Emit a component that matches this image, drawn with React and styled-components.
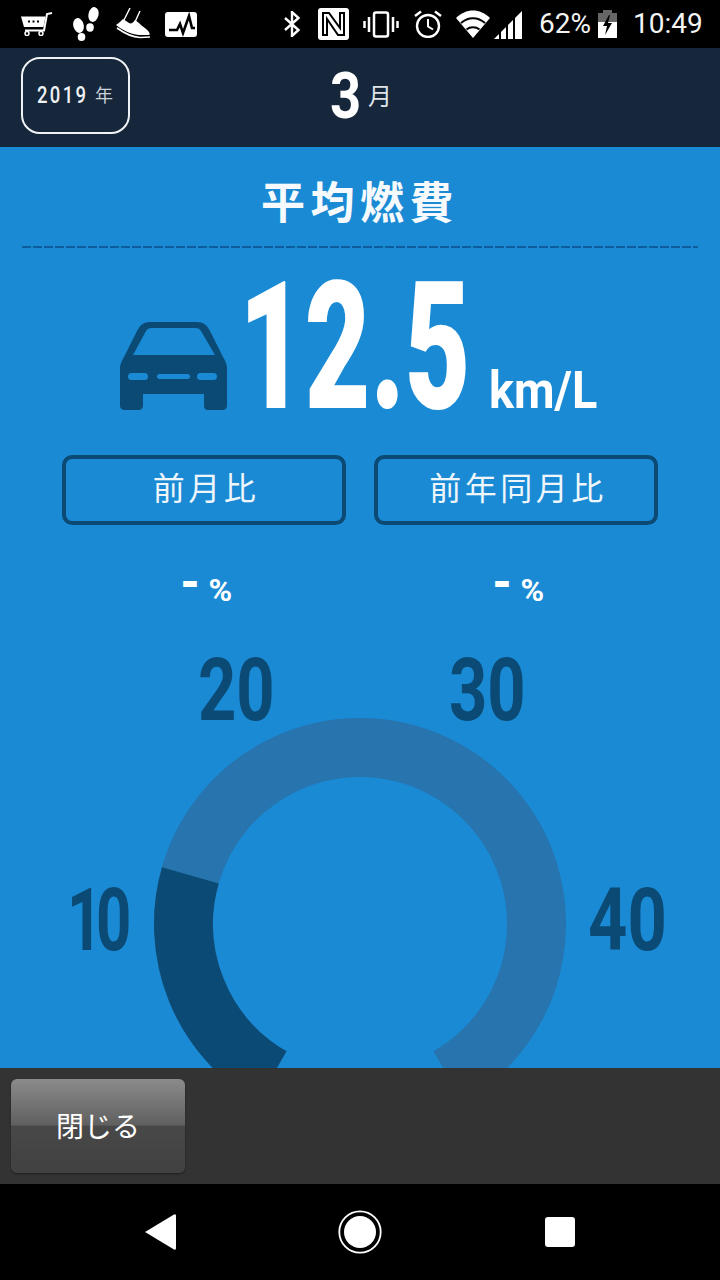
import React from 'react';
import styled, { createGlobalStyle } from 'styled-components';

const GlobalStyle = createGlobalStyle`
  html, body {
    margin: 0;
    padding: 0;
    background: #000;
  }
`;

const JP = `Roboto, "Noto Sans CJK JP", sans-serif`;
const BLUE = '#1a8ad4';
const NAVY = '#0b4a74';

const Page = styled.div`
  width: 720px;
  height: 1280px;
  display: flex;
  flex-direction: column;
  overflow: hidden;
  font-family: ${JP};
  color: #fff;
`;

const StatusBar = styled.div`
  height: 48px;
  flex: none;
  background: #000;
  display: flex;
  align-items: center;
  padding-left: 21px;
`;

const StatusIcon = styled.svg`
  flex: none;
  display: block;
  margin-left: ${p => p.$ml || 0}px;
`;

const StatusText = styled.span`
  font-size: 28px;
  line-height: 48px;
  color: #f4f4f4;
  margin-left: ${p => p.$ml}px;
  white-space: nowrap;
`;

const Header = styled.div`
  height: 99px;
  flex: none;
  background: #16273b;
  display: flex;
  align-items: center;
  padding-left: 21px;
`;

const YearButton = styled.div`
  width: 109px;
  height: 77px;
  margin-top: -4px;
  box-sizing: border-box;
  border: 2px solid #f0f3f5;
  border-radius: 19px;
  display: flex;
  align-items: center;
  padding-left: 14px;
`;

const Condensed = styled.span`
  display: inline-block;
  flex: none;
  width: ${p => p.$width}px;
  margin-bottom: ${p => p.$mb || 0}px;
  font-size: ${p => p.$size}px;
  font-weight: ${p => p.$weight || 700};
  letter-spacing: ${p => p.$spacing || 0}px;
  line-height: 0.72;
  white-space: nowrap;
  transform: scaleX(${p => p.$scale});
  transform-origin: left center;
  color: ${p => p.$color || '#fff'};
`;

const YearUnit = styled.span`
  font-size: 18px;
  line-height: 18px;
  color: #c9d0d6;
  margin-left: 6px;
`;

const MonthGroup = styled.div`
  display: flex;
  align-items: center;
  margin-left: 200px;
`;

const MonthUnit = styled.span`
  font-size: 24px;
  line-height: 26px;
  color: #dfe4e8;
  margin-left: 8px;
`;

const Main = styled.main`
  flex: 1;
  min-height: 0;
  overflow: hidden;
  background: ${BLUE};
  display: flex;
  flex-direction: column;
`;

const Title = styled.h1`
  margin: 34px 0 0;
  text-align: center;
  font-size: 44px;
  line-height: 46px;
  font-weight: 700;
  letter-spacing: 5.5px;
  color: #f6fafd;
`;

const Divider = styled.div`
  height: 2px;
  flex: none;
  margin: 19px 22px 0;
  background: repeating-linear-gradient(90deg, #0d5c9c 0 9px, transparent 9px 11px);
`;

const ValueRow = styled.div`
  display: flex;
  align-items: flex-end;
  height: 137px;
  margin-top: 28px;
  padding-left: 120px;
`;

const CarIcon = styled.svg`
  flex: none;
  display: block;
  margin-right: 12px;
  margin-bottom: 2px;
`;

const Pills = styled.div`
  display: grid;
  grid-template-columns: 284px 284px;
  column-gap: 28px;
  padding-left: 62px;
  margin-top: 43px;
`;

const Pill = styled.div`
  height: 70px;
  box-sizing: border-box;
  border: 4px solid ${NAVY};
  border-radius: 10px;
  padding: 0 0 8px 4px;
  display: flex;
  align-items: center;
  justify-content: center;
  font-size: 32px;
  letter-spacing: 3.5px;
  color: #eef6fb;
`;

const PercentRow = styled.div`
  display: grid;
  grid-template-columns: 284px 284px;
  column-gap: 28px;
  padding-left: 62px;
  margin-top: 45px;
  height: 40px;
`;

const Percent = styled.div`
  display: flex;
  align-items: center;
  justify-content: center;
  gap: 8px;
  padding-left: 4px;
  font-weight: 700;
  font-size: 32px;
  line-height: 40px;
`;

const Dash = styled.span`
  font-size: 46px;
  font-weight: 900;
  line-height: 40px;
  margin-top: -16px;
`;

const Gauge = styled.div`
  position: relative;
  flex: none;
  height: 428px;
  margin-top: 30px;
`;

const GaugeRing = styled.svg`
  display: block;
`;

const GaugeLabel = styled(Condensed)`
  position: absolute;
  left: ${p => p.$left}px;
  top: ${p => p.$top}px;
`;

const BottomBar = styled.div`
  height: 116px;
  flex: none;
  background: #333;
  padding: 11px 0 0 11px;
  box-sizing: border-box;
`;

const CloseButton = styled.button`
  display: flex;
  align-items: center;
  justify-content: center;
  width: 174px;
  height: 94px;
  padding: 0 0 2px;
  border: 0;
  border-radius: 6px;
  background: linear-gradient(#8b8b8b 0%, #606060 49%, #484848 50%, #414141 100%);
  box-shadow: 0 1px 2px rgba(0, 0, 0, 0.45);
  color: #fff;
  font-family: ${JP};
  font-size: 28px;
`;

const NavBar = styled.div`
  height: 96px;
  flex: none;
  background: #000;
  display: flex;
  align-items: center;
  justify-content: center;
`;

const arcPoint = (r, deg) => {
  const a = (deg * Math.PI) / 180;
  return [360 + r * Math.sin(a), 284 - r * Math.cos(a)];
};

const arc = (r, from, to) => {
  const [x1, y1] = arcPoint(r, from);
  const [x2, y2] = arcPoint(r, to);
  const large = to - from > 180 ? 1 : 0;
  return `M${x1} ${y1} A${r} ${r} 0 ${large} 1 ${x2} ${y2}`;
};

const StatusIcons = {
  Cart: () => (
    <StatusIcon width="32" height="24" viewBox="0 0 32 24" fill="none">
      <path d="M0 4.5H24.5L22.5 15H3Z" fill="#fff" />
      <path d="M31 1L26 2L23 18.5H4" stroke="#fff" strokeWidth="2" />
      <circle cx="6" cy="21.5" r="2" stroke="#fff" strokeWidth="1.5" />
      <circle cx="20" cy="21.5" r="2" stroke="#fff" strokeWidth="1.5" />
      <path d="M7 9.5h2M11.5 9.5h2M16 9.5h2" stroke="#000" strokeWidth="2" />
    </StatusIcon>
  ),
  Feet: () => (
    <StatusIcon $ml={19} width="27" height="34" viewBox="0 0 27 34" fill="#fff">
      <ellipse cx="21.5" cy="7.5" rx="5" ry="7.5" transform="rotate(12 21.5 7.5)" />
      <ellipse cx="18" cy="20.5" rx="3.8" ry="4.2" />
      <ellipse cx="6.5" cy="18.5" rx="5.2" ry="7.5" transform="rotate(-14 6.5 18.5)" />
      <ellipse cx="9.5" cy="30" rx="3.8" ry="4" />
    </StatusIcon>
  ),
  Shoe: () => (
    <StatusIcon $ml={17} width="34" height="32" viewBox="0 0 34 32" fill="none">
      <path d="M0 17C3 15 5 13 7 11L13 15C15 16 17 15 19 12L23 15C26 19 31 20 33.500 25V27L23 27C14 26 6 22 0 17Z" fill="#fff" />
      <path d="M1 20C8 25 16 29 24 29.500L34 29" stroke="#fff" strokeWidth="1.6" />
      <path d="M14 0L8 12M24 3L19 14" stroke="#fff" strokeWidth="1.4" />
    </StatusIcon>
  ),
  Activity: () => (
    <StatusIcon $ml={15} width="32" height="25" viewBox="0 0 32 25" fill="none">
      <rect width="32" height="25" rx="3" fill="#fff" />
      <path d="M4 18H12L15 12L18 21L24 4L27 16H30" stroke="#000" strokeWidth="2.6" />
    </StatusIcon>
  ),
  Bluetooth: () => (
    <StatusIcon $ml={86} width="18" height="26" viewBox="0 0 18 26" fill="none">
      <path d="M2 7L15.5 19L9 25V1L15.5 7L2 19" stroke="#fff" strokeWidth="2.4" />
    </StatusIcon>
  ),
  Nfc: () => (
    <StatusIcon $ml={17} width="31" height="32" viewBox="0 0 31 32" fill="none">
      <rect width="31" height="32" rx="3" fill="#fff" />
      <path d="M11 5H5V27H9V11L20 27H26V5H22V20L11 5Z" stroke="#000" strokeWidth="2" />
    </StatusIcon>
  ),
  Vibrate: () => (
    <StatusIcon $ml={14} width="36" height="27" viewBox="0 0 36 27" fill="none">
      <rect x="11" y="1.5" width="14" height="24" rx="2" stroke="#fff" strokeWidth="2.5" />
      <path d="M6 6V21M1.5 10V17M30 6V21M34.5 10V17" stroke="#fff" strokeWidth="2.5" />
    </StatusIcon>
  ),
  Alarm: () => (
    <StatusIcon $ml={15} width="28" height="28" viewBox="0 0 28 28" fill="none">
      <circle cx="14" cy="16" r="11" stroke="#fff" strokeWidth="2.4" />
      <path d="M14 9V16.5L19 19.5" stroke="#fff" strokeWidth="2" />
      <path d="M1 6L7 1.5M27 6L21 1.5" stroke="#fff" strokeWidth="2.4" />
    </StatusIcon>
  ),
  Wifi: () => (
    <StatusIcon $ml={14} width="34" height="28" viewBox="0 0 34 28" fill="none">
      <path d="M0 8C10 -2 24 -2 34 8L17 28Z" fill="#fff" />
      <path d="M5 13C12 6.500 22 6.500 29 13M10.500 19.500C14 16.500 20 16.500 23.500 19.500" stroke="#000" strokeWidth="2" />
    </StatusIcon>
  ),
  Signal: () => (
    <StatusIcon $ml={4} width="29" height="29" viewBox="0 0 29 29" fill="#fff">
      <path d="M0 29L5 24V29Z" />
      <path d="M7 22L12 17V29H7Z" />
      <path d="M14 15L19 10V29H14Z" />
      <path d="M21 8L28 1V29H21Z" />
    </StatusIcon>
  ),
  Battery: () => (
    <StatusIcon $ml={7} width="19" height="28" viewBox="0 0 19 28">
      <path d="M5 0H14V3H19V12H0V3H5Z" fill="#666" />
      <rect y="12" width="19" height="16" fill="#fff" />
      <path d="M11 5L5 16H9L7 25L14 13H10L12 5Z" fill="#000" />
    </StatusIcon>
  ),
};

const labels = [
  { text: '20', left: 198, top: 18, scale: 0.76, spacing: 0 },
  { text: '30', left: 449, top: 18, scale: 0.76, spacing: 0 },
  { text: '10', left: 67, top: 248, scale: 0.7, spacing: -9 },
  { text: '40', left: 588, top: 248, scale: 0.78, spacing: 0 },
];

const App = () => {
  return (
    <>
      <GlobalStyle />
      <Page>
        <StatusBar>
          <StatusIcons.Cart />
          <StatusIcons.Feet />
          <StatusIcons.Shoe />
          <StatusIcons.Activity />
          <StatusIcons.Bluetooth />
          <StatusIcons.Nfc />
          <StatusIcons.Vibrate />
          <StatusIcons.Alarm />
          <StatusIcons.Wifi />
          <StatusIcons.Signal />
          <StatusText $ml={16}>62%</StatusText>
          <StatusIcons.Battery />
          <StatusText $ml={16}>10:49</StatusText>
        </StatusBar>

        <Header>
          <YearButton>
            <Condensed $size={24} $weight={500} $spacing={3} $scale={0.77} $width={52} $color="#f0f3f5">2019</Condensed>
            <YearUnit>年</YearUnit>
          </YearButton>
          <MonthGroup>
            <Condensed $size={64} $scale={0.85} $width={30}>3</Condensed>
            <MonthUnit>月</MonthUnit>
          </MonthGroup>
        </Header>

        <Main>
          <Title>平均燃費</Title>
          <Divider />
          <ValueRow>
            <CarIcon width="107" height="88" viewBox="0 0 107 88">
              <path
                d="M30 0H77C83 0 87 3 90 9L103 35C105 38 107 42 107 46V84C107 86 105 88 103 88H88C85 88 84 86 84 84V72H23V84C23 86 21 88 19 88H4C2 88 0 86 0 84V46C0 42 2 38 4 35L17 9C20 3 24 0 30 0Z"
                fill={NAVY}
              />
              <path d="M13 33L26 9C27 7 29 6 32 6H75C78 6 80 7 81 9L95 33Z" fill={BLUE} />
              <rect x="8" y="51" width="20" height="7" rx="3.5" fill={BLUE} />
              <rect x="37" y="52" width="33" height="5" rx="2.5" fill={BLUE} />
              <rect x="77" y="51" width="20" height="7" rx="3.5" fill={BLUE} />
            </CarIcon>
            <Condensed $size={178} $weight={900} $scale={0.637} $width={250} $mb={1}>12.5</Condensed>
            <Condensed $size={52} $scale={0.9} $width={110} $mb={3}>km/L</Condensed>
          </ValueRow>

          <Pills>
            <Pill>前月比</Pill>
            <Pill>前年同月比</Pill>
          </Pills>

          <PercentRow>
            <Percent><Dash>-</Dash>%</Percent>
            <Percent><Dash>-</Dash>%</Percent>
          </PercentRow>

          <Gauge>
            <GaugeRing width="720" height="428" viewBox="0 0 720 428" fill="none">
              <path d={arc(176.5, -150, 150)} stroke="#2774ae" strokeWidth="59" />
              <path d={arc(176.5, -150, -74)} stroke={NAVY} strokeWidth="59" />
            </GaugeRing>
            {labels.map(l => (
              <GaugeLabel
                key={l.text}
                $left={l.left}
                $top={l.top}
                $size={88}
                $scale={l.scale}
                $spacing={l.spacing}
                $width={80}
                $color={NAVY}
              >
                {l.text}
              </GaugeLabel>
            ))}
          </Gauge>
        </Main>

        <BottomBar>
          <CloseButton>閉じる</CloseButton>
        </BottomBar>

        <NavBar>
          <svg width="432" height="44" viewBox="0 0 432 44">
            <path d="M1 22L30 4.500Q32 3.500 32 6V38Q32 40.500 30 39.500Z" fill="#fff" />
            <circle cx="216" cy="22" r="20.700" fill="none" stroke="#fff" strokeWidth="1.800" />
            <circle cx="216" cy="22" r="16" fill="#fff" />
            <rect x="401" y="7" width="30" height="30" rx="3" fill="#fff" />
          </svg>
        </NavBar>
      </Page>
    </>
  );
};

export default App;
